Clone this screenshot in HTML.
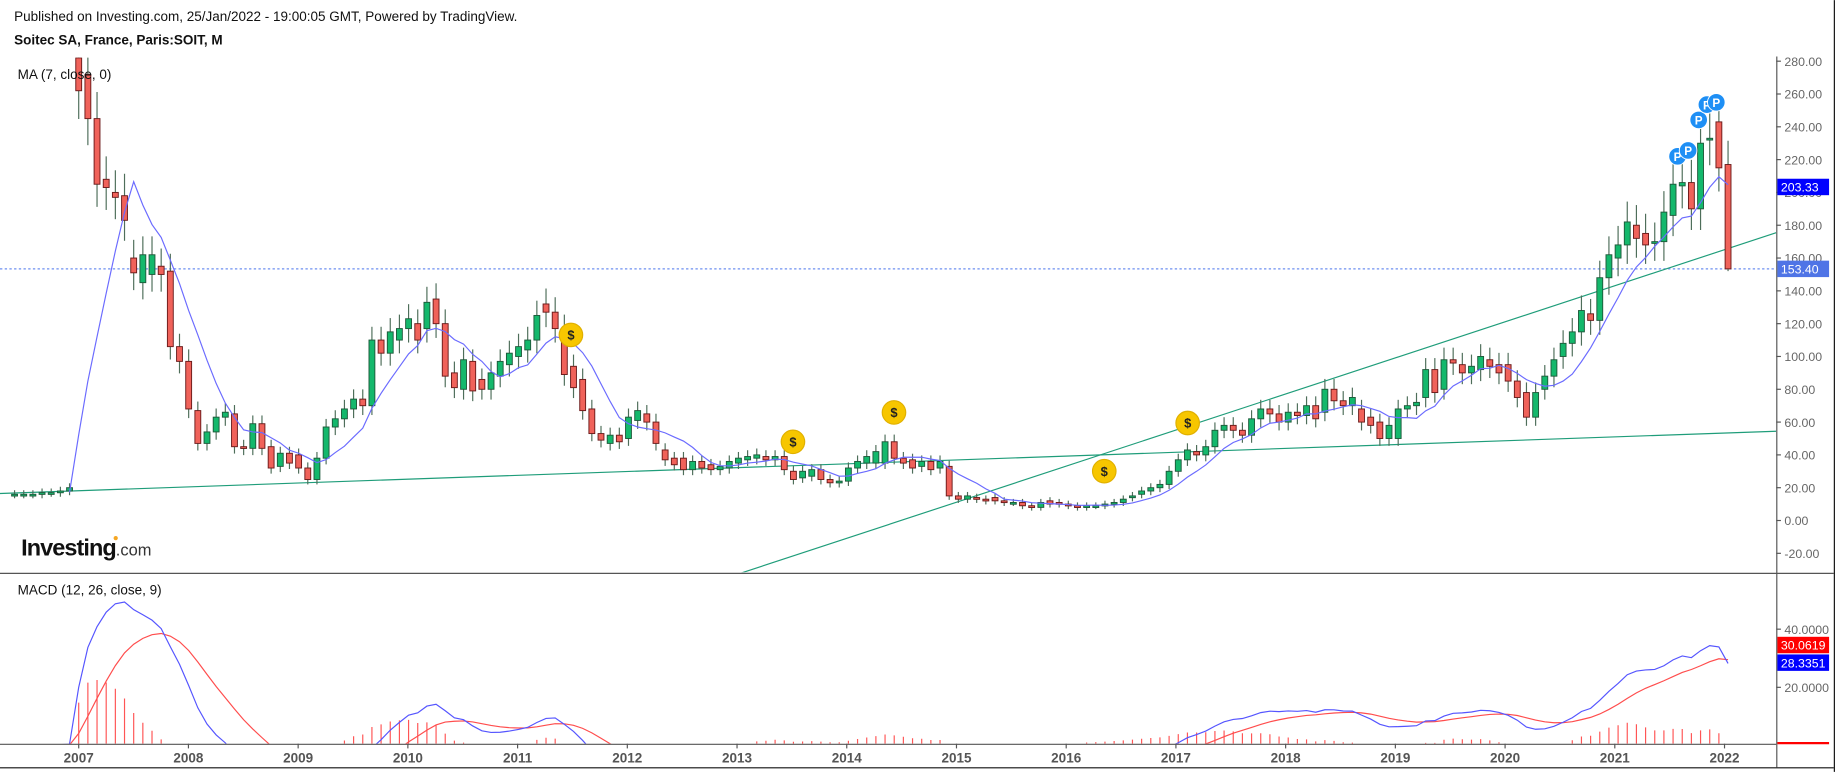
<!DOCTYPE html>
<html><head><meta charset="utf-8"><style>
html,body{margin:0;padding:0;background:#fff;overflow:hidden}
svg{display:block;font-family:"Liberation Sans",Arial,sans-serif}
</style></head><body>
<svg id="s" width="1842" height="772" viewBox="0 0 1568 657" xmlns="http://www.w3.org/2000/svg">
<defs>
<clipPath id="cp"><rect x="0" y="49" width="1512" height="438"/></clipPath>
<clipPath id="cm"><rect x="0" y="490" width="1512" height="143"/></clipPath>
</defs>
<rect width="1568" height="657" fill="#fff"/>
<text x="12" y="18" font-size="11.5" fill="#111">Published on Investing.com, 25/Jan/2022 - 19:00:05 GMT, Powered by TradingView.</text>
<text x="12" y="38" font-size="11.5" font-weight="bold" fill="#111">Soitec SA, France, Paris:SOIT, M</text>
<g id="price" clip-path="url(#cp)"></g>
<g id="macd" clip-path="url(#cm)"></g>
<text x="15" y="67" font-size="11.5" fill="#111">MA (7, close, 0)</text>
<text x="15" y="506" font-size="11.5" fill="#111">MACD (12, 26, close, 9)</text>
<text x="18" y="473" font-size="20" font-weight="bold" fill="#111" letter-spacing="-0.8">Investing<tspan font-size="14" font-weight="normal" fill="#333" letter-spacing="0">.com</tspan></text>
<circle cx="98.5" cy="458" r="1.8" fill="#f5a623"/>
<line x1="0" y1="488" x2="1561" y2="488" stroke="#555" stroke-width="1"/>
<line x1="0" y1="633.5" x2="1512" y2="633.5" stroke="#555" stroke-width="1"/>
<line x1="1512.5" y1="48" x2="1512.5" y2="653" stroke="#555" stroke-width="1"/>
<line x1="1561.5" y1="0" x2="1561.5" y2="657" stroke="#111" stroke-width="1"/>
<line x1="0" y1="653.5" x2="1561" y2="653.5" stroke="#111" stroke-width="1"/>
<g id="axis" font-size="10.5" fill="#666"></g>
</svg>
<script>
var NS="http://www.w3.org/2000/svg";
function el(p,t,a,txt){var e=document.createElementNS(NS,t);for(var k in a)e.setAttribute(k,a[k]);if(txt!=null)e.textContent=txt;p.appendChild(e);return e;}
var P=document.getElementById('price'),M=document.getElementById('macd'),A=document.getElementById('axis');
function py(v){return 443-v*1.3964;}
function my(v){return 634.5-v*2.475;}
var d=[[16,16],[16,16],[16,16],[16,17],[17,17],[17,18],[18,20],
[282,262],[272,245],[245,205],[208,203],[200,197],[198,183],[160,151],[145,162],[150,162],[155,150],[152,106],[106,97],
[97,68],[67,47],[47,54],[54,63],[63,66],[65,45],[45,44],[44,59],[59,44],[45,32],[33,41],[41,35],
[40,32],[32,25],[25,38],[38,57],[57,62],[62,68],[68,74],[74,70],[70,110],[110,102],[102,115],[110,117],
[117,123],[120,110],[117,133],[135,120],[120,88],[90,81],[80,98],[97,79],[86,80],[80,90],[88,97],[95,102],
[100,106],[104,110],[110,125],[132,127],[127,117],[117,89],[94,81],[86,67],[68,53],[53,49],[47,52],[52,48],
[50,63],[61,67],[65,60],[60,47],[43,37],[38,34],[38,31],[31,36],[36,32],[34,31],[31,33],[32,36],
[35,38],[37,39],[38,40],[39,37],[37,39],[39,31],[30,25],[26,30],[27,31],[31,25],[25,23],[23,24],
[24,32],[32,36],[35,39],[35,42],[35,48],[48,38],[38,35],[37,32],[33,36],[36,31],[32,36],[33,15],
[15,13],[13,15],[14,13],[13,12],[14,12],[12,11],[11,11],[11,9],[9,8],[8,11],[12,10],[11,10],
[10,9],[9,8],[8,9],[9,9],[9,10],[10,11],[11,13],[14,15],[16,18],[18,20],[20,22],[22,30],
[30,37],[37,43],[42,40],[40,45],[45,55],[55,58],[58,55],[55,52],[52,62],[62,68],[68,65],[65,60],
[60,66],[66,64],[64,70],[70,62],[66,80],[80,73],[73,70],[70,75],[68,60],[63,58],[60,50],[50,58],
[50,68],[68,70],[70,72],[75,92],[92,78],[80,98],[98,96],[95,90],[90,94],[92,100],[98,94],[95,90],
[95,85],[85,75],[78,63],[63,78],[80,88],[88,98],[100,108],[108,115],[115,128],[126,122],[122,148],[148,162],
[160,168],[168,182],[180,172],[175,168],[170,170],[170,188],[186,205],[204,206],[206,190],[190,230],[232,233],[243,215],
[217,153.4]];
function X(m){return 67+(m-7)*7.8;}
for(var v=280;v>=-20;v-=20){var y=py(v);el(A,'line',{x1:1512,y1:y,x2:1516,y2:y,stroke:'#555'});el(A,'text',{x:1519,y:y+4},v.toFixed(2));}
[[40,'40.0000'],[20,'20.0000']].forEach(function(t){var y=my(t[0]);el(A,'line',{x1:1512,y1:y,x2:1516,y2:y,stroke:'#555'});el(A,'text',{x:1519,y:y+4},t[1]);});
for(var yr=2007;yr<=2022;yr++){var x=67+(yr-2007)*93.4;el(A,'line',{x1:x,y1:633,x2:x,y2:637,stroke:'#555'});el(A,'text',{x:x,y:649,'text-anchor':'middle','font-weight':'bold',fill:'#555','font-size':'11.5'},String(yr));}
el(P,'line',{x1:0,y1:py(153.4),x2:1512,y2:py(153.4),stroke:'#6d8ff0','stroke-dasharray':'2,2'});
el(P,'line',{x1:0,y1:420,x2:1512,y2:367,stroke:'#1f9d7a'});
el(P,'line',{x1:630,y1:488,x2:1512,y2:198,stroke:'#1f9d7a'});
for(var i=0;i<d.length;i++){var o=d[i][0],c=d[i][1],x=X(i);var hi=Math.max(o,c),lo=Math.min(o,c);var h=hi+hi*0.06+1.5,l=lo-lo*0.06-1.5;
if(i==7)h=290;if(i==187)l=152;
el(P,'line',{x1:x,y1:py(h),x2:x,y2:py(l),stroke:'#4e6e5a'});
var up=c>=o;var t=py(hi),b=py(lo);if(b-t<1.5){b=t+1.5;}
el(P,'rect',{x:x-2.5,y:t,width:5,height:b-t,fill:up?'#14b86c':'#f0625a',stroke:up?'#1d5a3a':'#6b1a1a','stroke-width':0.8});}
var cl=d.map(function(a){return a[1];});var pts=[];
for(var i=6;i<cl.length;i++){var s=0;for(var j=i-6;j<=i;j++)s+=cl[j];pts.push(X(i)+','+py(s/7));}
el(P,'polyline',{points:pts.join(' '),fill:'none',stroke:'#6b6bff','stroke-width':1});
[[486,285],[675,376],[761,351],[940,401],[1011,360]].forEach(function(p){el(P,'circle',{cx:p[0],cy:p[1],r:10,fill:'#f7c600',stroke:'#e0b000'});el(P,'text',{x:p[0],y:p[1]+4,'text-anchor':'middle','font-size':11,'font-weight':'bold',fill:'#222'},'$');});
[[1428,133],[1437,128],[1446,102],[1453,89],[1461,87]].forEach(function(p){el(P,'circle',{cx:p[0],cy:p[1],r:7.5,fill:'#1e8ff5',stroke:'#fff','stroke-width':0.8});el(P,'text',{x:p[0],y:p[1]+4,'text-anchor':'middle','font-size':10,'font-weight':'bold',fill:'#fff'},'P');});
function ema(a,n){var k=2/(n+1),r=[a[0]];for(var i=1;i<a.length;i++)r.push(a[i]*k+r[i-1]*(1-k));return r;}
var e12=ema(cl,12),e26=ema(cl,26),mac=e12.map(function(v,i){return v-e26[i];}),sig=ema(mac,9);
var mp=[],sp=[];
for(var i=0;i<cl.length;i++){mp.push(X(i)+','+my(mac[i]));sp.push(X(i)+','+my(sig[i]));var hh=mac[i]-sig[i];if(hh>0.3)el(M,'line',{x1:X(i),y1:633,x2:X(i),y2:Math.max(491,633-hh*2.2),stroke:'#ff5555','stroke-width':1});}
el(M,'polyline',{points:sp.join(' '),fill:'none',stroke:'#ff4d4d','stroke-width':1});
el(M,'polyline',{points:mp.join(' '),fill:'none',stroke:'#5555ff','stroke-width':1});
function box(y,col,txt){el(A,'rect',{x:1513,y:y-7,width:44,height:14,fill:col});el(A,'text',{x:1516,y:y+4,fill:'#fff','font-size':10.5},txt);}
box(py(203.33),'#0000ff','203.33');
box(py(153.4),'#4f74e6','153.40');
box(549,'#ff0000','30.0619');
box(564,'#0000ff','28.3351');
el(A,'line',{x1:1513,y1:632.5,x2:1557,y2:632.5,stroke:'#ff0000','stroke-width':2});
</script>
</body></html>
